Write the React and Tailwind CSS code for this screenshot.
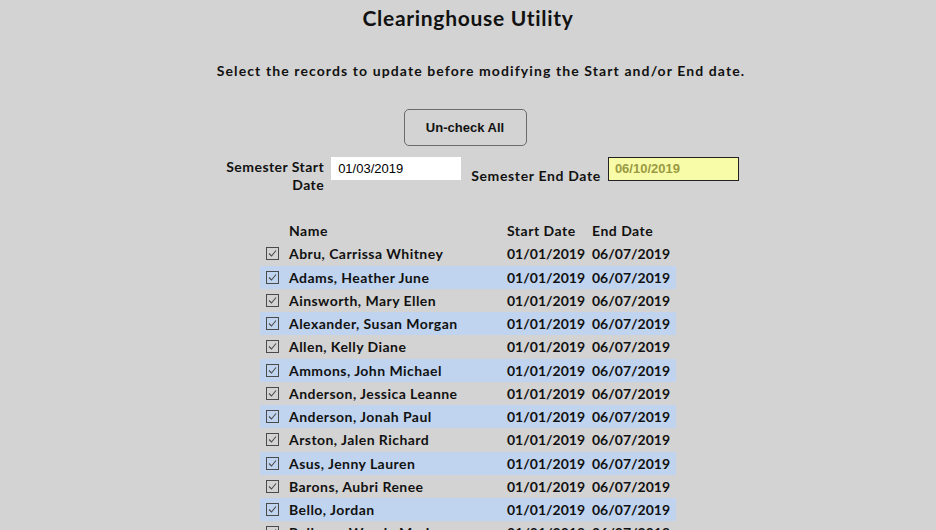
import React from 'react';

const students = [
  'Abru, Carrissa Whitney',
  'Adams, Heather June',
  'Ainsworth, Mary Ellen',
  'Alexander, Susan Morgan',
  'Allen, Kelly Diane',
  'Ammons, John Michael',
  'Anderson, Jessica Leanne',
  'Anderson, Jonah Paul',
  'Arston, Jalen Richard',
  'Asus, Jenny Lauren',
  'Barons, Aubri Renee',
  'Bello, Jordan',
  'Bellamy, Wendy Marie',
];

function CheckBox() {
  return (
    <svg width="13" height="13" viewBox="0 0 13 13" className="block">
      <rect x="0.5" y="0.5" width="12" height="12" fill="none" stroke="#4a4a4a" strokeWidth="1" />
      <path d="M3 6.5 L5.5 9 L10 3.5" fill="none" stroke="#4a4a4a" strokeWidth="1.1" />
    </svg>
  );
}

export default function App() {
  return (
    <div className="w-[936px] h-[530px] overflow-hidden bg-[#d3d3d3] text-[#111] font-['Lato','Liberation_Sans',sans-serif] font-bold">
      {/* Header */}
      <h1 className="pt-[5px] text-center text-[21px] leading-[26px] font-bold tracking-[0.7px]">Clearinghouse Utility</h1>
      <p className="mt-[31px] pl-[26px] text-center text-[14px] leading-[18px] tracking-[1.1px]">
        Select the records to update before modifying the Start and/or End date.
      </p>

      <div className="mt-[29px] flex justify-center pr-[6px]">
        <button className="w-[123px] h-[37px] rounded-[5px] border border-[#6b6b6b] bg-[#d3d3d3] font-['Liberation_Sans',Arial,sans-serif] text-[13px] font-bold text-[#111]">
          Un-check All
        </button>
      </div>

      {/* Dates */}
      <div className="mt-[11px] flex items-start justify-center pl-[27px] tracking-[0.45px]">
        <label className="w-[100px] mt-[1px] text-right text-[14px] leading-[18px]">Semester Start Date</label>
        <div className="ml-[7px] w-[130px] h-[23px] bg-white px-[7px] flex items-center font-['Liberation_Sans',Arial,sans-serif] font-normal text-[13px] tracking-normal text-black">
          01/03/2019
        </div>
        <label className="ml-[10px] mt-[10px] text-[14px] leading-[18px] tracking-[0.65px]">Semester End Date</label>
        <div className="ml-[7px] w-[131px] h-[24px] bg-[#f8fca8] border border-[#222] px-[6px] flex items-center font-['Liberation_Sans',Arial,sans-serif] font-bold text-[13px] tracking-normal text-[#9a9a42]">
          06/10/2019
        </div>
      </div>

      {/* Table */}
      <div className="mt-[25px] w-[416px] mx-auto text-[14px]">
        <div className="flex h-[23.3px] items-center tracking-[0.5px]">
          <div className="w-[29px]" />
          <div className="w-[218px]">Name</div>
          <div className="w-[85px]">Start Date</div>
          <div>End Date</div>
        </div>
        {students.map((name, i) => (
          <div
            key={name}
            className={`flex h-[23.25px] items-center ${i % 2 === 1 ? 'bg-[#c0d4ef]' : ''}`}
          >
            <div className="w-[29px] pl-[6px]">
              <CheckBox />
            </div>
            <div className="w-[218px] whitespace-nowrap tracking-[0.45px]">{name}</div>
            <div className="w-[85px]">01/01/2019</div>
            <div>06/07/2019</div>
          </div>
        ))}
      </div>
    </div>
  );
}
